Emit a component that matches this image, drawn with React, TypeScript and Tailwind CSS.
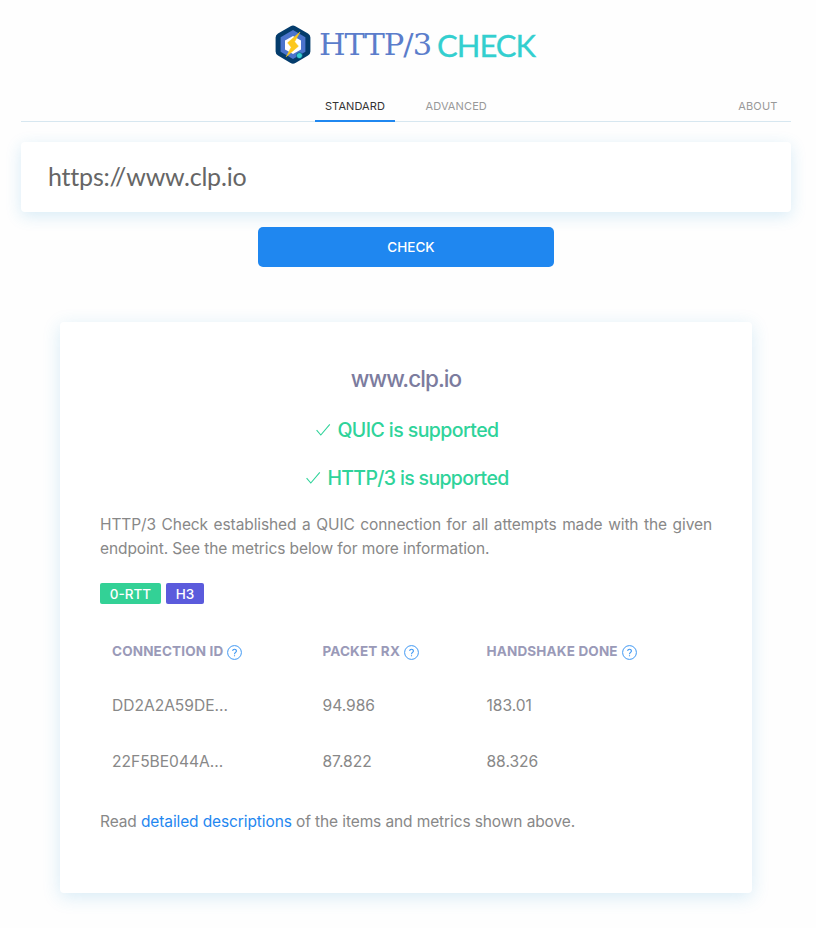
import React from "react";

function Logo() {
  return (
    <svg width="36" height="40" viewBox="0 0 36 40" className="mt-px block shrink-0">
      <path d="M15.6 1.2Q18 0 20.4 1.2L33 8.4Q35.4 9.8 35.4 12.4V26.6Q35.4 29.2 33 30.6L20.4 38Q18 39.3 15.6 38L3 30.6Q.6 29.2.6 26.6V12.4Q.6 9.8 3 8.4Z" fill="#043c6c" />
      <path d="M18 5L30.4 12.2V26.8L18 34L5.6 26.8V12.2Z" fill="#4b74cc" />
      <path d="M18 11L26 15.6V24.4L18 29L10 24.4V15.6Z" fill="#fff" />
      <path d="M25 7L12.6 17.8L16.2 22.2L11.2 31.8L23.4 21.2L19.6 16.8Z" fill="#fcc81c" stroke="#fcc81c" strokeWidth=".5" strokeLinejoin="round" />
      <circle cx="24.4" cy="30.6" r="3" fill="#34cfd2" stroke="#043c6c" strokeWidth=".6" />
    </svg>
  );
}

function Check() {
  return (
    <svg width="16" height="16" viewBox="0 0 16 16" className="mr-[6px] -mt-[3px] block shrink-0" fill="none" stroke="#2fd39a" strokeWidth="1.1">
      <path d="M1.6 8.2L5.8 13L14.8 2.4" />
    </svg>
  );
}

function Help() {
  return (
    <svg width="15" height="15" viewBox="0 0 15 15" className="ml-1 mt-[2px] block shrink-0" fill="none" stroke="#3f98f3" strokeWidth="1">
      <circle cx="7.5" cy="7.5" r="6.9" />
      <path d="M5.7 6.1C5.7 3.7 9.4 3.7 9.4 6C9.4 7.4 7.5 7.4 7.5 9.2M7.5 10.2V11.3" strokeWidth="1.1" />
    </svg>
  );
}

const rows = [
  ["DD2A2A59DE...", "94.986", "183.01"],
  ["22F5BE044A...", "87.822", "88.326"],
];

export default function App() {
  return (
    <div className="h-[928px] w-[816px] overflow-hidden bg-[#fefefe] pl-[21px] pr-[25px] font-['Inter',sans-serif] text-[#888]">
      <header className="flex h-[89px] items-start pl-[254px] pt-[24px]">
        <Logo />
        <div className="ml-[8px] mt-px flex h-10 whitespace-nowrap leading-10">
          <span className="w-[118px] font-['DejaVu_Serif',serif] text-[30.5px] tracking-[-1px] text-[#5b7dcb]">HTTP/3</span>
          <span className="font-['Lato',sans-serif] text-[31px] tracking-[-1px] text-[#33cfcf] [-webkit-text-stroke:0.3px_#33cfcf]">CHECK</span>
        </div>
      </header>
      <nav className="flex h-[33px] border-b border-[#d7e7f0] pl-[294px] text-[11px] leading-[34px]">
        <span className="h-[33px] w-20 border-b-2 border-[#1f87f0] text-center tracking-[0.1px] text-[#333]">STANDARD</span>
        <span className="ml-[30.5px] tracking-[0.12px] text-[#999]">ADVANCED</span>
        <span className="ml-auto mr-[13.5px] tracking-[0.15px] text-[#999]">ABOUT</span>
      </nav>
      <div className="mt-5 flex h-[70px] items-center rounded-[4px] bg-white pl-[27px] font-['Lato',sans-serif] text-[25px] tracking-[-0.2px] text-[#666] shadow-[0_4px_16px_rgba(40,150,210,0.18)] [font-variant-ligatures:none]">
        https://www.clp.io
      </div>
      <button className="ml-[237px] mt-[15px] block h-10 w-[296px] rounded-[5px] bg-[#1f87f0] pl-[10px] text-[13.5px] font-medium leading-10 text-white">CHECK</button>
      <main className="ml-[39px] mt-[55px] h-[571px] w-[692px] rounded-[4px] bg-white px-10 pt-[41px] shadow-[0_4px_18px_rgba(40,150,210,0.18)]">
        <h1 className="text-center text-[22.5px] font-[450] leading-8 tracking-[-0.95px] text-[#7c7c9e]">www.clp.io</h1>
        <div className="mt-[20px] flex h-8 items-center justify-center pl-[2px] text-[19.5px] font-[450] tracking-[-0.57px] text-[#2fd39a]"><Check />QUIC is supported</div>
        <div className="mt-4 flex h-8 items-center justify-center pl-[2px] text-[19.5px] font-[450] tracking-[-0.66px] text-[#2fd39a]"><Check />HTTP/3 is supported</div>
        <p className="mt-[18px] text-justify text-[15.5px] font-[440] leading-6 tracking-[-0.1px]">
          HTTP/3 Check established a QUIC connection for all attempts made with the given endpoint. See the metrics below for more information.
        </p>
        <div className="mt-[22px] flex gap-[5px] text-center text-[13.5px] font-medium leading-[22px] text-white">
          <span className="h-[21px] w-[61px] rounded-[2px] bg-[#33d196]">0-RTT</span>
          <span className="h-[21px] w-[38px] rounded-[2px] bg-[#5b5bdc]">H3</span>
        </div>
        <div className="mt-[19px] grid grid-cols-[210.5px_164px_1fr] pl-3">
          {["CONNECTION ID", "PACKET RX", "HANDSHAKE DONE"].map((t) => (
            <div key={t} className="flex h-14 items-center text-[13.5px] font-[650] tracking-[0.16px] text-[#9a9ab8]">
              <span>{t}</span>
              <Help />
            </div>
          ))}
          {rows.flat().map((t) => (
            <div key={t} className="h-14 pt-[15px] text-[15.6px] font-[440] leading-6 tracking-[-0.03px]">{t}</div>
          ))}
        </div>
        <p className="mt-[19px] text-[15.5px] font-[440] leading-6 tracking-[-0.11px]">
          Read <a className="text-[#1f87f0]">detailed descriptions</a> of the items and metrics shown above.
        </p>
      </main>
    </div>
  );
}
